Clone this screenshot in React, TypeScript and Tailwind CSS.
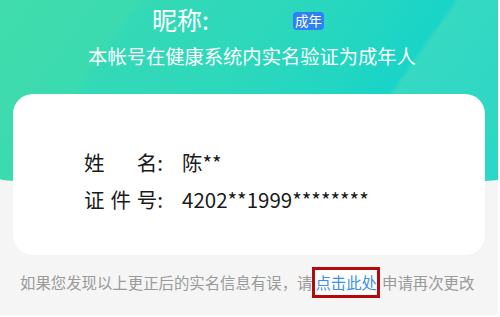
import React from "react";

const cjk = { fontFamily: '"Noto Sans CJK SC", "Noto Sans", sans-serif' };

export default function App() {
  return (
    <div
      className="relative w-[500px] h-[317px] overflow-hidden bg-[#f5f5f5] border-r-2 border-b-2 border-white"
      style={cjk}
    >
      {/* green header background */}
      <div className="absolute left-0 top-0 w-[500px] h-[185px] rounded-bl-[50%_6px] rounded-br-[50%_6px] bg-[linear-gradient(125deg,#40dcac_0%,#3bdab0_22%,#34d9b6_23%,#2dd8bb_45%,#22d6c2_62%,#19d4c8_72%,#36d9c2_73%,#2ad7c6_100%)]" />
      <div className="relative flex flex-col">
        <div className="flex items-center h-[38px] pl-[152px]">
          <span className="text-[25px] leading-none text-white">昵称:</span>
          <span className="ml-[84px] mt-[4px] flex items-center justify-center w-[31px] h-[18px] rounded-[4px] bg-[#2f80f5] text-[13.5px] leading-none text-white">
            成年
          </span>
        </div>
        <div className="flex items-center justify-center h-[38px] pl-[6px] text-[19.3px] leading-none text-white">
          本帐号在健康系统内实名验证为成年人
        </div>
        <div className="mx-[13px] mt-[18px] h-[161px] rounded-[20px] bg-white pt-[50px] pl-[71px] text-[#1a1a1a]">
          <div className="flex items-center h-[37px] text-[20.5px] leading-none">
            <span className="flex justify-between w-[79px]">
              <span>姓</span>
              <span>名:</span>
            </span>
            <span className="ml-[19px]">陈**</span>
          </div>
          <div className="flex items-center h-[37px] text-[20.5px] leading-none">
            <span className="flex justify-between w-[79px]">
              <span>证</span>
              <span>件</span>
              <span>号:</span>
            </span>
            <span className="ml-[19px]">4202**1999********</span>
          </div>
        </div>
        <div className="mt-[12px] flex items-center h-[31px] pl-[20px] text-[15.4px] leading-none text-[#9a9a9a]">
          <span>如果您发现以上更正后的实名信息有误，请</span>
          <span className="flex items-center h-[31px] border-[3px] border-[#b5090b] bg-white text-[#3b8ef0]">
            点击此处
          </span>
          <span className="ml-[2px]">申请再次更改</span>
        </div>
      </div>
    </div>
  );
}
